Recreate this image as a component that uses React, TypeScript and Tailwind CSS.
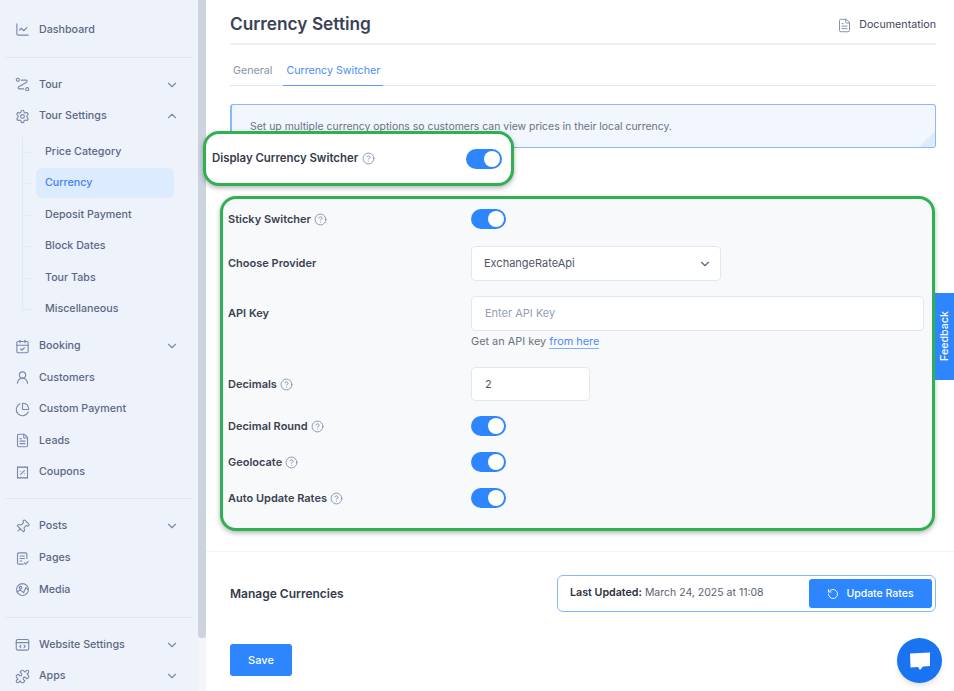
import type { ReactNode } from 'react'
import {
  CalendarCheck,
  ChartLine,
  ChartPie,
  ChevronDown,
  ChevronUp,
  CircleHelp,
  FileText,
  Pin,
  Puzzle,
  RotateCcw,
  Settings,
  UserRound,
} from 'lucide-react'

const font = { fontFamily: 'Inter, "Liberation Sans", sans-serif' }

function TourIcon() {
  return (
    <svg viewBox="0 0 24 24" fill="none" stroke="currentColor" strokeWidth="1.8" strokeLinecap="round" strokeLinejoin="round" className="h-[15px] w-[15px]">
      <circle cx="4.5" cy="4.5" r="2.5" />
      <circle cx="19.5" cy="19.5" r="2.5" />
      <path d="M10 5h7.5c2 0 2.6 2.4 1 3.5L6 15.5c-1.6 1.1-1 3.5 1 3.5h7" />
    </svg>
  )
}

function CouponIcon() {
  return (
    <svg viewBox="0 0 24 24" fill="none" stroke="currentColor" strokeWidth="1.8" strokeLinecap="round" strokeLinejoin="round" className="h-[15px] w-[15px]">
      <path d="M4 3l2 1 2-1 2 1 2-1 2 1 2-1 2 1 2-1v18l-2-1-2 1-2-1-2 1-2-1-2 1-2-1-2 1z" />
      <path d="M9 15l6-6" />
      <path d="M9 10h.01M15 14h.01" />
    </svg>
  )
}

function PagesIcon() {
  return (
    <svg viewBox="0 0 24 24" fill="none" stroke="currentColor" strokeWidth="1.8" strokeLinecap="round" strokeLinejoin="round" className="h-[15px] w-[15px]">
      <path d="M19 12V5a2 2 0 0 0-2-2H6a2 2 0 0 0-2 2v14a2 2 0 0 0 2 2h7" />
      <path d="M8 8h7M8 12h7M8 16h3" />
      <path d="M15 19l2 2 4-4" />
    </svg>
  )
}

function MediaIcon() {
  return (
    <svg viewBox="0 0 24 24" fill="none" stroke="currentColor" strokeWidth="1.8" strokeLinecap="round" strokeLinejoin="round" className="h-[15px] w-[15px]">
      <circle cx="12" cy="12" r="9.5" />
      <circle cx="9" cy="9" r="2" />
      <path d="M3.5 16l5-3.5 5 4.5 4-8 3.5 3" />
    </svg>
  )
}

function WebsiteIcon() {
  return (
    <svg viewBox="0 0 24 24" fill="none" stroke="currentColor" strokeWidth="1.8" strokeLinecap="round" strokeLinejoin="round" className="h-[15px] w-[15px]">
      <rect x="2" y="4" width="20" height="17" rx="2.5" />
      <path d="M2 9h20" />
      <path d="M9.5 13l-2 2 2 2M14.5 13l2 2-2 2" />
    </svg>
  )
}

function NavRow({ icon, label, arrow }: { icon: ReactNode; label: string; arrow?: 'up' | 'down' }) {
  return (
    <div className="flex h-[31.6px] items-center pl-[15px] pr-[19px] text-[#5c6785]">
      <span className="flex w-[24px] text-[#7c88aa]">{icon}</span>
      <span className="flex-1 text-[10.7px] font-medium">{label}</span>
      {arrow === 'down' && <ChevronDown className="h-[14px] w-[14px] text-[#7f8aa8]" />}
      {arrow === 'up' && <ChevronUp className="h-[14px] w-[14px] text-[#7f8aa8]" />}
    </div>
  )
}

function SubRow({ label, active }: { label: string; active?: boolean }) {
  return (
    <div className="relative flex h-[31.4px] items-center pl-[9px]">
      <span className="absolute left-[-5px] top-1/2 h-px w-[9px] bg-[#dfeaf3]" />
      <span
        className={
          active
            ? 'flex h-[30px] w-[138px] items-center rounded-md bg-[#dcebfd] pl-[9px] text-[10.7px] font-medium text-[#3f82f5]'
            : 'pl-[9px] text-[10.7px] font-medium text-[#5c6785]'
        }
      >
        {label}
      </span>
    </div>
  )
}

function Divider({ className }: { className: string }) {
  return <div className={`mx-[6px] h-px bg-[#e1e7f1] ${className}`} />
}

function Sidebar() {
  return (
    <aside className="flex h-full w-[206px] shrink-0">
      <div className="w-[198px] bg-[#eef3fb] pt-[14px]">
        <NavRow icon={<ChartLine className="h-[15px] w-[15px]" strokeWidth={1.8} />} label="Dashboard" />
        <Divider className="mt-[11px] mb-[11.5px]" />
        <NavRow icon={<TourIcon />} label="Tour" arrow="down" />
        <NavRow icon={<Settings className="h-[15px] w-[15px]" strokeWidth={1.8} />} label="Tour Settings" arrow="up" />
        <div className="relative ml-[27px] pt-[4.1px]">
          <span className="absolute bottom-[15px] left-[-5px] top-[5px] w-px bg-[#dfeaf3]" />
          <SubRow label="Price Category" />
          <SubRow label="Currency" active />
          <SubRow label="Deposit Payment" />
          <SubRow label="Block Dates" />
          <SubRow label="Tour Tabs" />
          <SubRow label="Miscellaneous" />
        </div>
        <div className="mt-[5.6px]">
          <NavRow icon={<CalendarCheck className="h-[15px] w-[15px]" strokeWidth={1.8} />} label="Booking" arrow="down" />
          <NavRow icon={<UserRound className="h-[15px] w-[15px]" strokeWidth={1.8} />} label="Customers" />
          <NavRow icon={<ChartPie className="h-[15px] w-[15px]" strokeWidth={1.8} />} label="Custom Payment" />
          <NavRow icon={<FileText className="h-[15px] w-[15px]" strokeWidth={1.8} />} label="Leads" />
          <NavRow icon={<CouponIcon />} label="Coupons" />
        </div>
        <Divider className="mt-[10px] mb-[11.4px]" />
        <NavRow icon={<Pin className="h-[15px] w-[15px] rotate-45" strokeWidth={1.8} />} label="Posts" arrow="down" />
        <NavRow icon={<PagesIcon />} label="Pages" />
        <NavRow icon={<MediaIcon />} label="Media" />
        <Divider className="mt-[11.6px] mb-[11px]" />
        <NavRow icon={<WebsiteIcon />} label="Website Settings" arrow="down" />
        <NavRow icon={<Puzzle className="h-[15px] w-[15px]" strokeWidth={1.8} />} label="Apps" arrow="down" />
      </div>
      <div className="w-[8px] bg-[#f4f6f9]">
        <div className="h-[638px] rounded-b-[3px] bg-[#cdd4e0]" />
      </div>
    </aside>
  )
}

function Toggle({ className }: { className?: string }) {
  return (
    <span className={`flex h-[20px] w-[35px] items-center justify-end rounded-full bg-[#2e86ff] pr-[2px] ${className ?? ''}`}>
      <span className="h-[16px] w-[16px] rounded-full bg-white" />
    </span>
  )
}

function Help() {
  return <CircleHelp className="h-[13px] w-[13px] text-[#8490ae]" strokeWidth={1.7} />
}

function Label({ text, help, className }: { text: string; help?: boolean; className?: string }) {
  return (
    <div className={`flex w-[243px] shrink-0 items-center gap-[3px] text-[11px] font-semibold text-[#3b4252] ${className ?? ''}`}>
      {text}
      {help && <Help />}
    </div>
  )
}

function ToggleRow({ text, className }: { text: string; className?: string }) {
  return (
    <div className={`flex h-[20px] items-center ${className ?? ''}`}>
      <Label text={text} help />
      <Toggle />
    </div>
  )
}

function SettingsPanel() {
  return (
    <div className="mt-[48px] ml-[-10px] mr-[1px] h-[335px] rounded-[16px] border-[3px] border-[#2fb152] bg-[#f8f9fb] pl-[5px] pr-[8px] pt-[10px] shadow-[0_2px_5px_rgba(0,0,0,0.3)]">
      <ToggleRow text="Sticky Switcher" />
      <div className="mt-[17px] flex items-center">
        <Label text="Choose Provider" />
        <div className="flex h-[35px] w-[250px] items-center justify-between rounded border border-[#e3e7f0] bg-white pl-[12px] pr-[8px] text-[11px] text-[#4f5668]">
          ExchangeRateApi
          <ChevronDown className="h-[14px] w-[14px] text-[#5c6785]" />
        </div>
      </div>
      <div className="mt-[15px] flex">
        <Label text="API Key" className="h-[35px]" />
        <div className="flex-1">
          <div className="flex h-[35px] items-center rounded border border-[#e3e7f0] bg-white pl-[13px] text-[11px] text-[#949db3]">
            Enter API Key
          </div>
          <div className="mt-[3px] text-[10.9px] leading-[15px] text-[#6b7280]">
            Get an API key <span className="border-b border-[#7fb0ff] text-[#4c8bf5]">from here</span>
          </div>
        </div>
      </div>
      <div className="mt-[18px] flex items-center">
        <Label text="Decimals" help />
        <div className="flex h-[34px] w-[119px] items-center rounded border border-[#e3e7f0] bg-white pl-[13px] text-[11px] text-[#4f5668]">
          2
        </div>
      </div>
      <ToggleRow text="Decimal Round" className="mt-[15px]" />
      <ToggleRow text="Geolocate" className="mt-[16px]" />
      <ToggleRow text="Auto Update Rates" className="mt-[16px]" />
    </div>
  )
}

export default function App() {
  return (
    <div style={font} className="relative flex h-[691px] w-[954px] overflow-hidden bg-white">
      <Sidebar />
      <main className="relative flex-1">
        <div className="pl-[24px] pr-[18px]">
          <header className="flex h-[45px] items-center justify-between border-b-2 border-[#f0f1f4] pt-[5px]">
            <h1 className="text-[17.3px] font-semibold text-[#3a4256]">Currency Setting</h1>
            <div className="flex items-center gap-[7px] pt-[3px] text-[10.7px] text-[#3f4657]">
              <FileText className="h-[15px] w-[15px] text-[#8490ae]" strokeWidth={1.6} />
              Documentation
            </div>
          </header>
          <nav className="mt-[11px] flex h-[30px] border-b border-[#e4e8f0] text-[10.7px]">
            <span className="flex h-[30px] items-center px-[3px] text-[#8a92a3]">General</span>
            <span className="ml-[8px] flex h-[30px] w-[100px] items-center whitespace-nowrap border-b border-[#5a98fb] px-[3px] pt-[1px] text-[#4c8bf5]">
              Currency Switcher
            </span>
          </nav>
          <div className="relative mt-[18px] flex h-[44px] items-center overflow-hidden rounded-[3px] border border-l-2 border-[#8ab8fb] bg-[#f2f7ff] pl-[18px] pt-[1px] text-[10.45px] text-[#6b7280]">
            Set up multiple currency options so customers can view prices in their local currency.
            <span className="absolute bottom-0 right-0 h-0 w-0 border-b-[16px] border-l-[16px] border-b-[#dcebfd] border-l-transparent" />
          </div>
          <SettingsPanel />
          <div className="mt-[20px] h-px mx-[-24px] mr-[-18px] bg-[#f3f4f7]" />
          <div className="mt-[23px] flex items-center justify-between">
            <span className="text-[12px] font-semibold text-[#343b4c]">Manage Currencies</span>
            <div className="flex h-[37px] w-[379px] items-center justify-between rounded-md border border-[#86b6ff] pl-[12px] pr-[3px] text-[10.5px] text-[#5a6272]">
              <span>
                <b className="text-[10.7px] font-semibold text-[#2b3140]">Last Updated:</b> March 24, 2025 at 11:08
              </span>
              <button className="flex h-[29px] w-[123px] items-center justify-center gap-[7px] rounded-[3px] bg-[#2e86ff] font-medium text-white">
                <RotateCcw className="h-[12px] w-[12px]" strokeWidth={1.8} />
                Update Rates
              </button>
            </div>
          </div>
          <button className="mt-[32px] h-[32px] w-[62px] rounded-[3px] bg-[#2e86ff] text-[11px] font-medium text-white">
            Save
          </button>
        </div>
        <div className="absolute left-[-3px] top-[131px] flex h-[55px] w-[311px] items-center rounded-[16px] border-[3px] border-[#2fb152] bg-white pl-[6px] shadow-[0_2px_5px_rgba(0,0,0,0.3)]">
          <div className="flex w-[254px] items-center gap-[4px] text-[11.4px] font-semibold text-[#343b4c]">
            Display Currency Switcher
            <Help />
          </div>
          <Toggle className="w-[36px]" />
        </div>
      </main>
      <div className="absolute right-0 top-[293px] flex h-[87px] w-[19px] items-center justify-center bg-[#2e86ff]">
        <span className="-rotate-90 whitespace-nowrap text-[10.7px] font-medium text-white">Feedback</span>
      </div>
      <div className="absolute left-[897px] top-[638px] flex h-[45px] w-[45px] items-center justify-center rounded-full bg-[#1a73f0] shadow-md">
        <svg viewBox="0 0 24 24" className="h-[24px] w-[24px]" fill="white">
          <path d="M2 4.5L22 3.5V17L15 17.5L12 21L10 18L2.5 18.5z" />
        </svg>
      </div>
    </div>
  )
}
